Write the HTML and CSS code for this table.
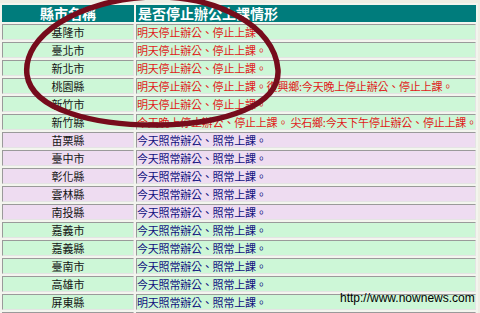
FILE: index.html
```html
<!DOCTYPE html>
<html lang="zh-Hant">
<head>
<meta charset="utf-8">
<title>停止辦公上課情形</title>
<link rel="stylesheet" href="styles.css">
</head>
<body>
<div class="page">
  <table class="status">
    <thead>
      <tr>
        <th class="col-city">縣市名稱</th>
        <th class="col-info">是否停止辦公上課情形</th>
      </tr>
    </thead>
    <tbody>
      <tr class="g"><td class="city">基隆市</td><td class="info red">明天停止辦公、停止上課。</td></tr>
      <tr class="g"><td class="city">臺北市</td><td class="info red">明天停止辦公、停止上課。</td></tr>
      <tr class="g"><td class="city">新北市</td><td class="info red">明天停止辦公、停止上課。</td></tr>
      <tr class="g"><td class="city">桃園縣</td><td class="info red">明天停止辦公、停止上課。復興鄉:今天晚上停止辦公、停止上課。</td></tr>
      <tr class="g"><td class="city">新竹市</td><td class="info red">明天停止辦公、停止上課。</td></tr>
      <tr class="g"><td class="city">新竹縣</td><td class="info red">今天晚上停止辦公、停止上課。 尖石鄉:今天下午停止辦公、停止上課。</td></tr>
      <tr class="p"><td class="city">苗栗縣</td><td class="info blue">今天照常辦公、照常上課。</td></tr>
      <tr class="p"><td class="city">臺中市</td><td class="info blue">今天照常辦公、照常上課。</td></tr>
      <tr class="p"><td class="city">彰化縣</td><td class="info blue">今天照常辦公、照常上課。</td></tr>
      <tr class="p"><td class="city">雲林縣</td><td class="info blue">今天照常辦公、照常上課。</td></tr>
      <tr class="p"><td class="city">南投縣</td><td class="info blue">今天照常辦公、照常上課。</td></tr>
      <tr class="g"><td class="city">嘉義市</td><td class="info blue">今天照常辦公、照常上課。</td></tr>
      <tr class="g"><td class="city">嘉義縣</td><td class="info blue">今天照常辦公、照常上課。</td></tr>
      <tr class="g"><td class="city">臺南市</td><td class="info blue">今天照常辦公、照常上課。</td></tr>
      <tr class="g"><td class="city">高雄市</td><td class="info blue">今天照常辦公、照常上課。</td></tr>
      <tr class="g"><td class="city">屏東縣</td><td class="info blue">明天照常辦公、照常上課。</td></tr>
      <tr class="p"><td class="city">臺東縣</td><td class="info red">明天停止辦公、停止上課。明天停止辦公、停止上課。明天停止辦公、停止上課。</td></tr>
    </tbody>
  </table>

  <svg class="circle" width="480" height="313" viewBox="0 0 480 313" aria-hidden="true">
    <path d="M 27 75 C 22 35, 80 0, 150 -3 C 215 -5, 275 25, 278 70 C 280 105, 225 124, 160 125 C 95 126, 32 110, 27 75 Z"
          fill="none" stroke="#760c1c" stroke-width="5.5" stroke-linecap="round"/>
  </svg>

  <div class="watermark">http://www.nownews.com</div>
</div>
</body>
</html>
```

FILE: styles.css
```css
html, body {
  margin: 0;
  padding: 0;
  background: #eeeee4;
}

.page {
  position: relative;
  width: 480px;
  height: 313px;
  overflow: hidden;
  padding-top: 3px;
  box-sizing: border-box;
}

.status {
  border-collapse: separate;
  border-spacing: 2px;
  width: 478px;
  table-layout: fixed;
  background: #f3f5ee;
  font-family: "Noto Sans CJK TC", "Noto Sans CJK SC", sans-serif;
  font-size: 11px;
}

.col-city {
  width: 132px;
}

.status th {
  background: #007c7c;
  color: #ffffff;
  font-size: 14px;
  font-weight: bold;
  height: 17px;
  line-height: 17px;
  padding: 0;
  box-sizing: border-box;
  white-space: nowrap;
}

.status th.col-city {
  text-align: center;
}

.status th.col-info {
  text-align: left;
  padding-left: 2px;
}

.status td {
  height: 16px;
  line-height: 14px;
  padding: 0;
  box-sizing: border-box;
  border-top: 1px solid #9a9a9a;
  border-left: 1px solid #9a9a9a;
  border-bottom: 1px solid #e4e4e4;
  border-right: 1px solid #e4e4e4;
  white-space: nowrap;
  overflow: hidden;
}

.status td.city {
  text-align: center;
  color: #141414;
}

.status td.info {
  text-align: left;
  padding-left: 0;
  letter-spacing: -0.2px;
}

.g td {
  background: #cdf7d7;
}

.p td {
  background: #eedcf1;
}

.red {
  color: #e01a1a;
}

.blue {
  color: #10107e;
}

.circle {
  position: absolute;
  left: 0;
  top: 0;
  pointer-events: none;
}

.watermark {
  position: absolute;
  left: 340px;
  top: 291px;
  font-family: "Liberation Sans", Arial, sans-serif;
  font-size: 12px;
  line-height: 14px;
  color: #000000;
  white-space: nowrap;
}
```
